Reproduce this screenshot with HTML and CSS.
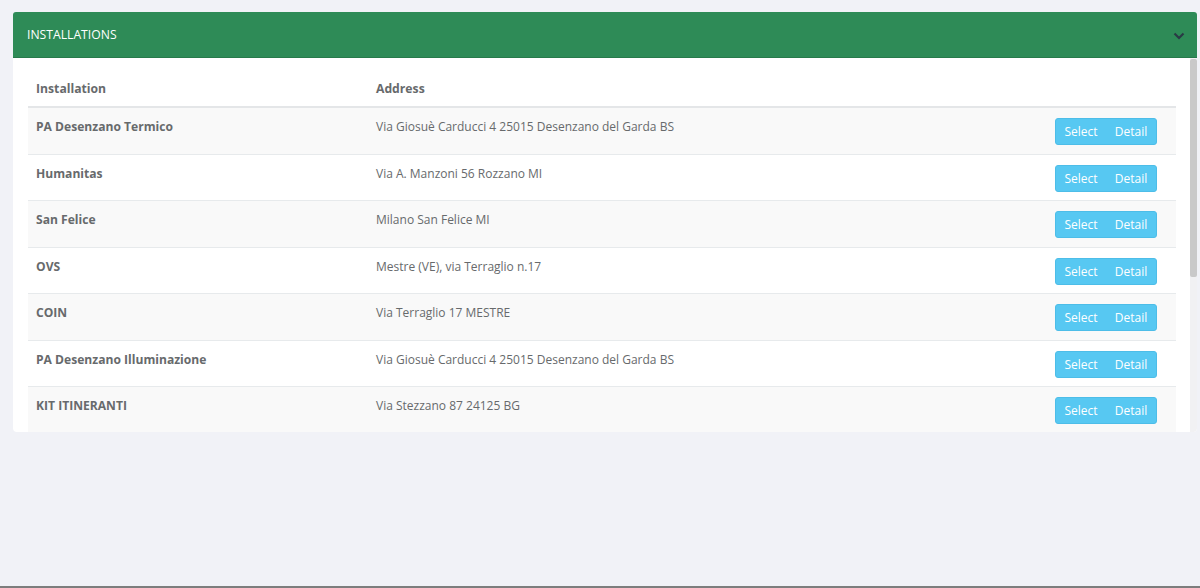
FILE: index.html
```html
<!DOCTYPE html>
<html>
<head>
<meta charset="utf-8">
<link rel="stylesheet" href="styles.css">
</head>
<body>
<div class="page">
  <section class="panel">
    <header class="panel-head">
      <span class="panel-title">INSTALLATIONS</span>
      <svg class="chev" width="12" height="8" viewBox="0 0 12 8"><polyline points="1.5,1.5 6,6 10.5,1.5" fill="none" stroke="#2a3a45" stroke-width="2.2"/></svg>
    </header>
    <div class="panel-body">
      <div class="table-wrap">
        <table class="grid">
          <colgroup><col class="c1"><col><col class="c3"></colgroup>
          <thead>
            <tr><th>Installation</th><th>Address</th><th></th></tr>
          </thead>
          <tbody>
            <tr><td class="name">PA Desenzano Termico</td><td>Via Giosuè Carducci 4 25015 Desenzano del Garda BS</td><td class="act"><span class="btns"><button>Select</button><button>Detail</button></span></td></tr>
            <tr><td class="name">Humanitas</td><td>Via A. Manzoni 56 Rozzano MI</td><td class="act"><span class="btns"><button>Select</button><button>Detail</button></span></td></tr>
            <tr><td class="name">San Felice</td><td>Milano San Felice MI</td><td class="act"><span class="btns"><button>Select</button><button>Detail</button></span></td></tr>
            <tr><td class="name">OVS</td><td>Mestre (VE), via Terraglio n.17</td><td class="act"><span class="btns"><button>Select</button><button>Detail</button></span></td></tr>
            <tr><td class="name">COIN</td><td>Via Terraglio 17 MESTRE</td><td class="act"><span class="btns"><button>Select</button><button>Detail</button></span></td></tr>
            <tr><td class="name">PA Desenzano Illuminazione</td><td>Via Giosuè Carducci 4 25015 Desenzano del Garda BS</td><td class="act"><span class="btns"><button>Select</button><button>Detail</button></span></td></tr>
            <tr><td class="name">KIT ITINERANTI</td><td>Via Stezzano 87 24125 BG</td><td class="act"><span class="btns"><button>Select</button><button>Detail</button></span></td></tr>
          </tbody>
        </table>
      </div>
      <div class="scroll-track"><div class="scroll-thumb"></div></div>
    </div>
  </section>
  <div class="spacer"></div>
  <footer class="foot"></footer>
</div>
</body>
</html>
```
FILE: styles.css
```css
html, body {
  margin: 0;
  padding: 0;
  height: 100%;
}
body {
  background: #f1f2f7;
  font-family: "Open Sans", "Noto Sans", sans-serif;
  font-size: 12px;
  color: #676a6c;
  overflow: hidden;
}
.page {
  height: 100vh;
  display: flex;
  flex-direction: column;
  box-sizing: border-box;
  padding: 12px 3px 0 13px;
}
.panel {
  display: flex;
  flex-direction: column;
}
.panel-head {
  height: 45px;
  background: #2e8b57;
  border-bottom: 1px solid #277a4b;
  border-radius: 3px 3px 0 0;
  display: flex;
  align-items: center;
  justify-content: space-between;
  padding: 0 12px 0 14px;
}
.panel-title {
  color: #ffffff;
  font-size: 12.2px;
}
.chev {
  display: block;
  margin-top: 3px;
}
.panel-body {
  height: 374px;
  display: flex;
  background: #ffffff;
  border-radius: 0 0 4px 4px;
  overflow: hidden;
}
.table-wrap {
  flex: 1;
  padding: 15px 14px 0 15px;
  overflow: hidden;
}
.scroll-track {
  width: 7px;
  background: #f1f1f3;
  padding-top: 1px;
}
.scroll-thumb {
  height: 218px;
  background: #c9c9c9;
  border-radius: 2px;
}
.grid {
  width: 100%;
  border-collapse: collapse;
  table-layout: fixed;
}
.c1 { width: 340px; }
.c3 { width: 160px; }
.grid th {
  text-align: left;
  font-weight: 700;
  font-size: 12.2px;
  line-height: 20px;
  padding: 6px 8px 7px;
  border-bottom: 2px solid #e4e6e8;
}
.grid td {
  line-height: 20px;
  padding: 9px 8px 7px;
  border-top: 1px solid #e7eaec;
  vertical-align: top;
  white-space: nowrap;
}
.grid tbody tr:first-child td {
  border-top: 0;
}
.grid tbody tr:nth-child(odd) {
  background: #f9f9f9;
}
.grid td.name {
  font-weight: 700;
  font-size: 12.1px;
}
.grid td.act {
  text-align: right;
  padding: 10px 19px 8.5px 8px;
}
.btns {
  display: inline-flex;
  height: 27px;
  border: 1px solid #4dbde8;
  border-radius: 3px;
  background: #57c8f2;
  box-sizing: border-box;
  overflow: hidden;
  vertical-align: top;
}
.btns button {
  border: 0;
  background: transparent;
  color: #ffffff;
  font-family: "Open Sans", "Noto Sans", sans-serif;
  font-size: 12px;
  padding: 0;
  width: 50px;
  line-height: 25px;
  cursor: pointer;
}
.spacer {
  flex: 1;
}
.foot {
  height: 2px;
  background: #7d7d7d;
  margin: 0 -3px 0 -13px;
}
```
